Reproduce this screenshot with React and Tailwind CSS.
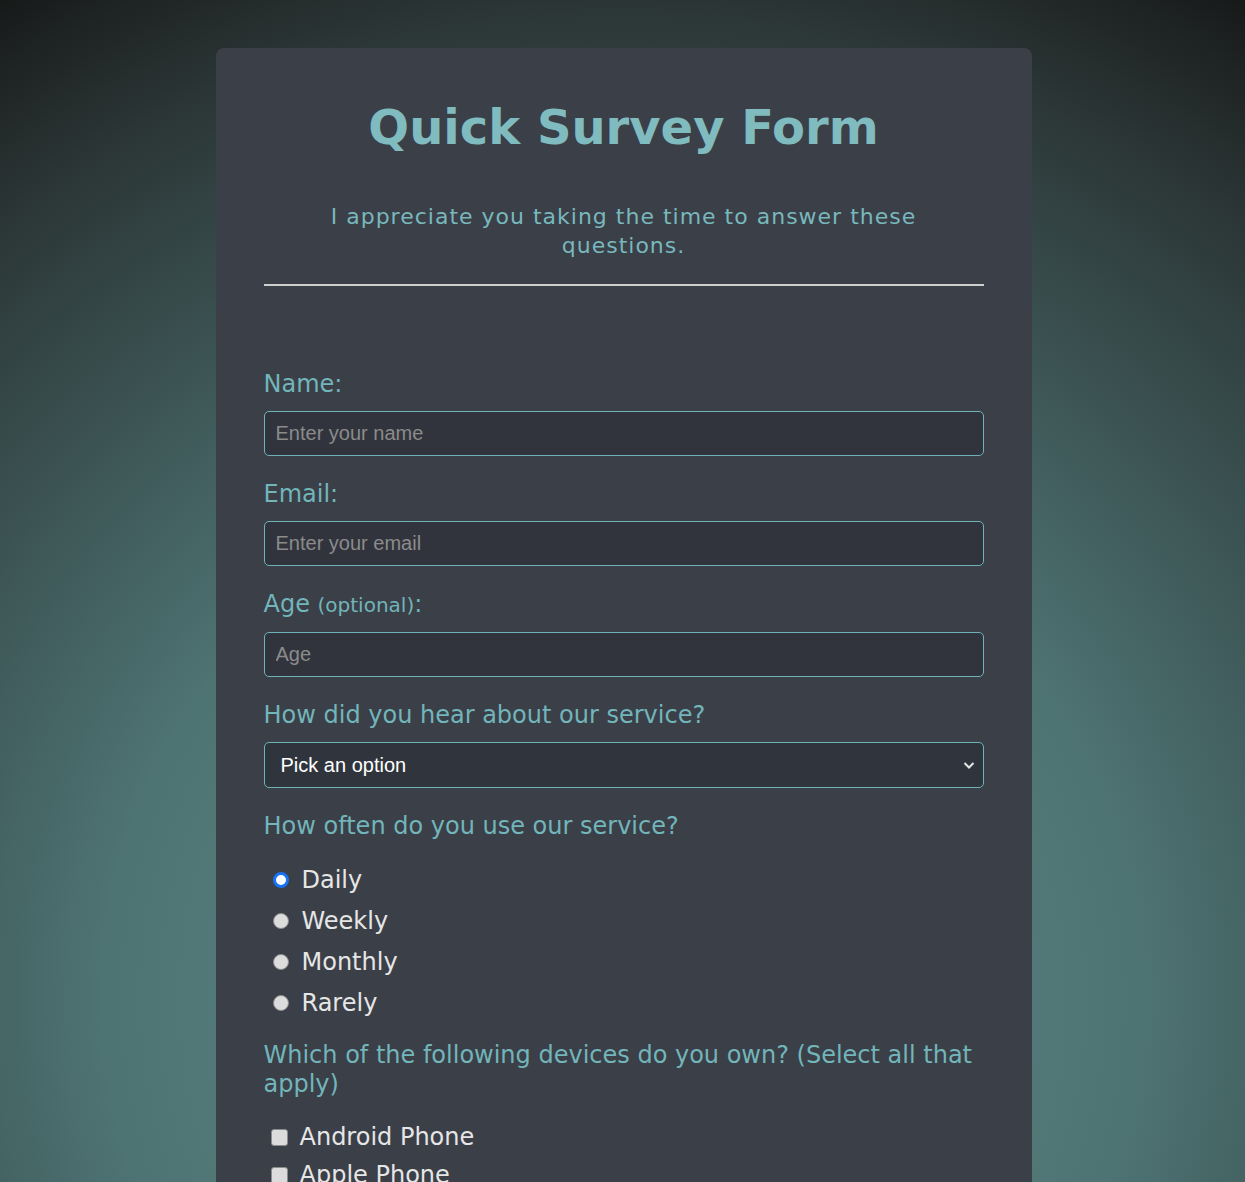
import { useState } from "react";

const labelCls = "block text-[24px] leading-[29px] text-[#72b5ba]";
const fieldCls =
  "mt-[12px] mb-[24px] block h-[45px] w-full rounded-[5px] border border-[#6fb3b8] bg-[#31343d] px-[11px] text-[20px] text-[#e6e6e6] outline-none placeholder:text-[#8b8b8b]";

const frequencies = ["Daily", "Weekly", "Monthly", "Rarely"];
const devices = ["Android Phone", "Apple Phone", "Tablet", "Laptop"];

export default function App() {
  const [often, setOften] = useState("Daily");

  return (
    <div
      className="min-h-screen bg-[radial-gradient(circle_at_50%_1000px,#5f8b8b_0px,#4e7373_520px,#2b3535_1000px,#151616_1200px)] pt-[48px] pb-[48px] pl-[2px]"
      style={{ fontFamily: '"DejaVu Sans", Verdana, sans-serif' }}
    >
      <main className="mx-auto w-[816px] rounded-lg bg-[#3b3f48] px-[48px] pt-[50px] pb-[48px]">
        <header className="text-center">
          <h1 className="text-[48px] font-bold leading-[58px] text-[#7fbbbf]">Quick Survey Form</h1>
          <p className="mt-[46px] text-[22px] leading-[29px] tracking-[1px] text-[#78b8bd]">
            I appreciate you taking the time to answer these
            <br />
            questions.
          </p>
          <hr className="mt-[24px] border-0 border-t-2 border-[#cfcfcf]" />
        </header>

        <form className="mt-[84px]" onSubmit={(e) => e.preventDefault()}>
          <label htmlFor="name" className={labelCls}>Name:</label>
          <input id="name" type="text" placeholder="Enter your name" className={fieldCls} style={{ fontFamily: '"Liberation Sans", Arial, sans-serif' }} />

          <label htmlFor="email" className={labelCls}>Email:</label>
          <input id="email" type="email" placeholder="Enter your email" className={fieldCls} style={{ fontFamily: '"Liberation Sans", Arial, sans-serif' }} />

          <label htmlFor="age" className={labelCls}>
            Age <span className="text-[20px]">(optional)</span>:
          </label>
          <input id="age" type="number" placeholder="Age" className={fieldCls} style={{ fontFamily: '"Liberation Sans", Arial, sans-serif' }} />

          <label htmlFor="source" className={labelCls}>How did you hear about our service?</label>
          <div className="relative mt-[12px] mb-[24px]">
            <select
              id="source"
              defaultValue=""
              className="block h-[46px] w-full appearance-none rounded-[5px] border border-[#6fb3b8] bg-[#30343d] pl-[16px] text-[20px] text-white outline-none"
              style={{ fontFamily: '"Liberation Sans", Arial, sans-serif' }}
            >
              <option value="">Pick an option</option>
              <option value="friend">Friend</option>
              <option value="ad">Advertisement</option>
              <option value="search">Search engine</option>
            </select>
            <svg
              className="pointer-events-none absolute right-[7px] top-1/2 h-[16px] w-[16px] -translate-y-1/2 text-[#e6e6e6]"
              viewBox="0 0 16 16"
              fill="none"
              stroke="currentColor"
              strokeWidth="2"
            >
              <path d="M3.5 6l4.5 4.5L12.5 6" />
            </svg>
          </div>

          <p className={labelCls}>How often do you use our service?</p>
          <div className="mt-[18px]">
            {frequencies.map((f) => (
              <label key={f} className="flex h-[41px] items-center gap-[13px] pl-[9px] text-[24px] text-[#e6e6e6]">
                <input
                  type="radio"
                  name="often"
                  checked={often === f}
                  onChange={() => setOften(f)}
                  className="h-[16px] w-[16px] shrink-0 appearance-none rounded-full border border-[#8c8c8c] bg-[#dcdcdc] checked:border-[3px] checked:border-[#1672f3] checked:bg-white"
                />
                {f}
              </label>
            ))}
          </div>

          <p className={`${labelCls} mt-[18px]`}>Which of the following devices do you own? (Select all that apply)</p>
          <div className="mt-[19px]">
            {devices.map((d) => (
              <label key={d} className="flex h-[38px] items-center gap-[12px] pl-[7px] text-[24px] text-[#e6e6e6]">
                <input
                  type="checkbox"
                  className="h-[17px] w-[17px] shrink-0 appearance-none rounded-[3px] border border-[#8c8c8c] bg-[#dcdcdc] checked:bg-[#1672f3]"
                />
                {d}
              </label>
            ))}
          </div>

          <label htmlFor="comments" className={`${labelCls} mt-[24px]`}>Any comments or suggestions?</label>
          <textarea
            id="comments"
            rows={4}
            placeholder="Enter your comments here..."
            className="mt-[12px] mb-[24px] block w-full rounded-[5px] border border-[#6fb3b8] bg-[#31343d] px-[11px] py-[8px] text-[20px] text-[#e6e6e6] outline-none placeholder:text-[#8b8b8b]"
            style={{ fontFamily: '"Liberation Sans", Arial, sans-serif' }}
          />

          <button type="submit" className="block h-[48px] w-full rounded-[5px] bg-[#6fb3b8] text-[22px] font-bold text-[#2b2f36]">
            Submit
          </button>
        </form>
      </main>
    </div>
  );
}
